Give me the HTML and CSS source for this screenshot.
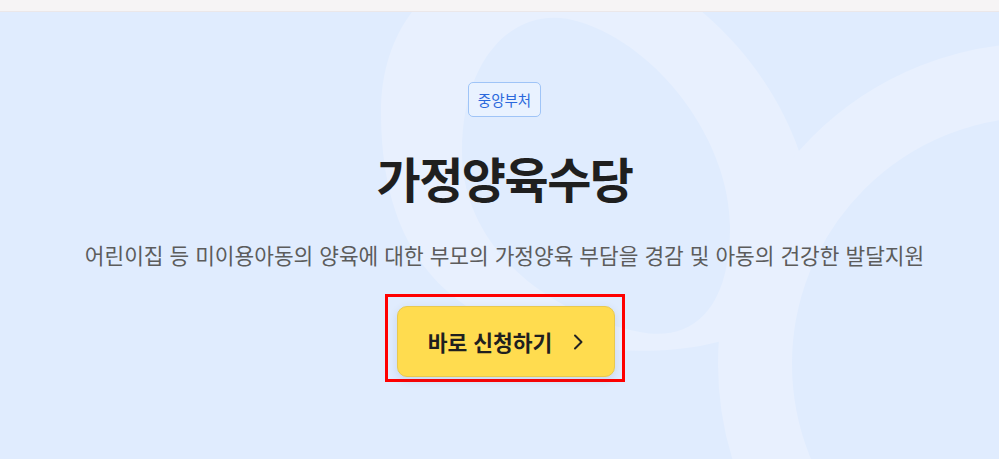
FILE: index.html
```html
<!DOCTYPE html>
<html lang="ko">
<head>
    <meta charset="UTF-8">
    <meta name="viewport" content="width=device-width, initial-scale=1.0">
    <title>가정양육수당</title>
    <link rel="stylesheet" href="styles.css">
</head>
<body>

<div class="topbar"></div>

<section class="hero">
    <!-- decorative rings behind the hero -->
    <svg class="hero-bg" viewBox="0 0 999 447" preserveAspectRatio="none" aria-hidden="true">
        <path fill="#e8f0fe" fill-rule="evenodd"
              d="M 381 100 C 381 -60 560 -110 690 -10 C 800 75 835 210 800 275 C 760 350 610 350 520 320 C 430 290 381 220 381 100 Z
                 M 462 140 C 462 40 520 -10 580 10 C 660 35 730 130 730 215 C 730 300 690 330 640 320 C 540 300 462 230 462 140 Z"/>
        <circle cx="1039" cy="352" r="284" fill="none" stroke="#e8f0fe" stroke-width="74"/>
    </svg>

    <div class="hero-inner">
        <span class="badge">중앙부처</span>
        <h1 class="title">가정양육수당</h1>
        <p class="desc">어린이집 등 미이용아동의 양육에 대한 부모의 가정양육 부담을 경감 및 아동의 건강한 발달지원</p>
        <div class="highlight">
            <button class="apply-btn">
                바로 신청하기
                <svg class="chevron" viewBox="0 0 10 16" aria-hidden="true">
                    <path d="M2 1.5 L8.5 8 L2 14.5" fill="none" stroke="#222" stroke-width="2" stroke-linecap="round" stroke-linejoin="round"/>
                </svg>
            </button>
        </div>
    </div>
</section>

</body>
</html>
```

FILE: styles.css
```css
body {
    margin: 0;
    padding: 0;
    background-color: #fff;
    font-family: "Noto Sans CJK KR", "Noto Sans", sans-serif;
}
.topbar {
    height: 11px;
    background-color: #f6f4f5;
    border-bottom: 1px solid #ebe7e9;
}
.hero {
    position: relative;
    height: 447px;
    background-color: #e0ecfe;
    overflow: hidden;
}
.hero-bg {
    position: absolute;
    top: 0;
    left: 0;
    width: 100%;
    height: 100%;
}
.hero-inner {
    position: relative;
    display: flex;
    flex-direction: column;
    align-items: center;
    padding-top: 70px;
    padding-left: 10px;
}
.badge {
    display: inline-block;
    padding: 0 9px;
    height: 33px;
    line-height: 33px;
    font-size: 14.5px;
    font-weight: 400;
    color: #2a68dc;
    background-color: #e9f2ff;
    border: 1px solid #9fc4f7;
    border-radius: 5px;
}
.title {
    margin: 28px 0 0;
    font-size: 48px;
    line-height: 64px;
    font-weight: 700;
    letter-spacing: -1.5px;
    color: #1f1f1f;
}
.desc {
    margin: 31px 0 0;
    font-size: 21.4px;
    line-height: 30px;
    color: #5c5c5c;
}
.highlight {
    margin-top: 24px;
    padding: 9px 7px 2px 9px;
    border: 3px solid #ff0000;
}
.apply-btn {
    display: flex;
    align-items: center;
    justify-content: center;
    gap: 21px;
    width: 218px;
    height: 71px;
    padding: 0;
    font-family: inherit;
    font-size: 21.5px;
    font-weight: 700;
    color: #1f1f1f;
    background-color: #ffdc4f;
    border: 1px solid #e9c94e;
    border-radius: 10px;
    box-shadow: 0 3px 8px rgba(60, 80, 120, 0.15);
    cursor: pointer;
}
.chevron {
    width: 10px;
    height: 16px;
}
```
